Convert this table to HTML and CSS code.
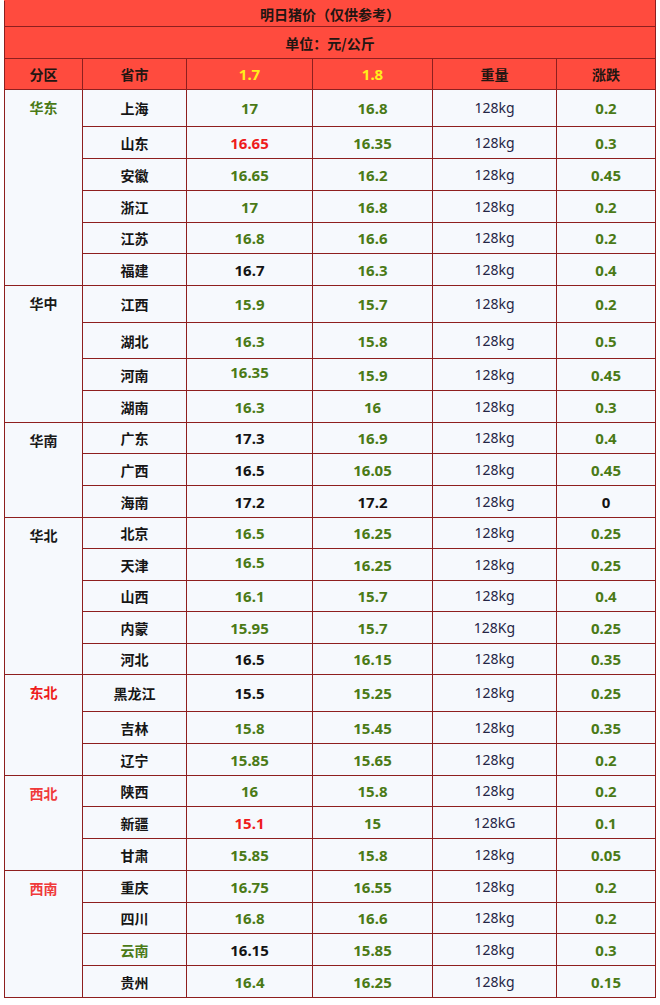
FILE: index.html
```html
<!DOCTYPE html>
<html lang="zh">
<head>
<meta charset="utf-8">
<title>明日猪价</title>
<link rel="stylesheet" href="styles.css">
</head>
<body>
<table class="price">
  <colgroup>
    <col class="c1"><col class="c2"><col class="c3"><col class="c4"><col class="c5"><col class="c6">
  </colgroup>
  <thead>
    <tr class="title"><th colspan="6">明日猪价（仅供参考）</th></tr>
    <tr class="unit"><th colspan="6">单位：元/公斤</th></tr>
    <tr class="head"><th>分区</th><th>省市</th><th class="yel">1.7</th><th class="yel">1.8</th><th>重量</th><th>涨跌</th></tr>
  </thead>
  <tbody>
    <tr class="t"><td class="reg g" rowspan="6">华东</td><td class="prov">上海</td><td class="n g">17</td><td class="n g">16.8</td><td class="w">128kg</td><td class="n g">0.2</td></tr>
    <tr><td class="prov">山东</td><td class="n r">16.65</td><td class="n g">16.35</td><td class="w">128kg</td><td class="n g">0.3</td></tr>
    <tr><td class="prov">安徽</td><td class="n g">16.65</td><td class="n g">16.2</td><td class="w">128kg</td><td class="n g">0.45</td></tr>
    <tr><td class="prov">浙江</td><td class="n g">17</td><td class="n g">16.8</td><td class="w">128kg</td><td class="n g">0.2</td></tr>
    <tr class="s"><td class="prov">江苏</td><td class="n g">16.8</td><td class="n g">16.6</td><td class="w">128kg</td><td class="n g">0.2</td></tr>
    <tr><td class="prov">福建</td><td class="n k">16.7</td><td class="n g">16.3</td><td class="w">128kg</td><td class="n g">0.4</td></tr>

    <tr class="t"><td class="reg" rowspan="4">华中</td><td class="prov">江西</td><td class="n g">15.9</td><td class="n g">15.7</td><td class="w">128kg</td><td class="n g">0.2</td></tr>
    <tr class="m"><td class="prov">湖北</td><td class="n g">16.3</td><td class="n g">15.8</td><td class="w">128kg</td><td class="n g">0.5</td></tr>
    <tr><td class="prov">河南</td><td class="n g up">16.35</td><td class="n g">15.9</td><td class="w">128kg</td><td class="n g">0.45</td></tr>
    <tr><td class="prov">湖南</td><td class="n g">16.3</td><td class="n g">16</td><td class="w">128kg</td><td class="n g">0.3</td></tr>

    <tr class="s"><td class="reg" rowspan="3">华南</td><td class="prov">广东</td><td class="n k">17.3</td><td class="n g">16.9</td><td class="w">128kg</td><td class="n g">0.4</td></tr>
    <tr><td class="prov">广西</td><td class="n k">16.5</td><td class="n g">16.05</td><td class="w">128kg</td><td class="n g">0.45</td></tr>
    <tr><td class="prov">海南</td><td class="n k">17.2</td><td class="n k">17.2</td><td class="w">128kg</td><td class="n k">0</td></tr>

    <tr class="s"><td class="reg" rowspan="5">华北</td><td class="prov">北京</td><td class="n g">16.5</td><td class="n g">16.25</td><td class="w">128kg</td><td class="n g">0.25</td></tr>
    <tr><td class="prov">天津</td><td class="n g up">16.5</td><td class="n g">16.25</td><td class="w">128kg</td><td class="n g">0.25</td></tr>
    <tr class="s"><td class="prov">山西</td><td class="n g">16.1</td><td class="n g">15.7</td><td class="w">128kg</td><td class="n g">0.4</td></tr>
    <tr><td class="prov">内蒙</td><td class="n g">15.95</td><td class="n g">15.7</td><td class="w">128Kg</td><td class="n g">0.25</td></tr>
    <tr class="s"><td class="prov">河北</td><td class="n k">16.5</td><td class="n g">16.15</td><td class="w">128kg</td><td class="n g">0.35</td></tr>

    <tr class="t"><td class="reg r" rowspan="3">东北</td><td class="prov">黑龙江</td><td class="n k">15.5</td><td class="n g">15.25</td><td class="w">128kg</td><td class="n g">0.25</td></tr>
    <tr><td class="prov">吉林</td><td class="n g">15.8</td><td class="n g">15.45</td><td class="w">128kg</td><td class="n g">0.35</td></tr>
    <tr><td class="prov">辽宁</td><td class="n g">15.85</td><td class="n g">15.65</td><td class="w">128kg</td><td class="n g">0.2</td></tr>

    <tr class="s"><td class="reg r light" rowspan="3">西北</td><td class="prov">陕西</td><td class="n g">16</td><td class="n g">15.8</td><td class="w">128kg</td><td class="n g">0.2</td></tr>
    <tr><td class="prov">新疆</td><td class="n r">15.1</td><td class="n g">15</td><td class="w">128kG</td><td class="n g">0.1</td></tr>
    <tr><td class="prov">甘肃</td><td class="n g">15.85</td><td class="n g">15.8</td><td class="w">128kg</td><td class="n g">0.05</td></tr>

    <tr><td class="reg r light" rowspan="4">西南</td><td class="prov">重庆</td><td class="n g">16.75</td><td class="n g">16.55</td><td class="w">128kg</td><td class="n g">0.2</td></tr>
    <tr class="s"><td class="prov">四川</td><td class="n g">16.8</td><td class="n g">16.6</td><td class="w">128kg</td><td class="n g">0.2</td></tr>
    <tr><td class="prov g">云南</td><td class="n k">16.15</td><td class="n g">15.85</td><td class="w">128kg</td><td class="n g">0.3</td></tr>
    <tr><td class="prov">贵州</td><td class="n g">16.4</td><td class="n g">16.25</td><td class="w">128kg</td><td class="n g">0.15</td></tr>
  </tbody>
</table>
</body>
</html>
```

FILE: styles.css
```css
html, body {
  margin: 0;
  padding: 0;
  background: #ffffff;
}

body {
  font-family: "Noto Sans", "Noto Sans CJK SC", sans-serif;
  color: #1a1a1a;
}

.price {
  margin-left: 4px;
  width: 651px;
  border-collapse: collapse;
  table-layout: fixed;
}

.c1 { width: 78px; }
.c2 { width: 104px; }
.c3 { width: 126px; }
.c4 { width: 120px; }
.c5 { width: 124px; }
.c6 { width: 99px; }

.price th,
.price td {
  border: 1px solid #8e1f1f;
  padding: 0;
  text-align: center;
  vertical-align: middle;
  line-height: 18px;
}

.price thead th {
  background: #ff4b3e;
  color: #221612;
  font-family: "Noto Sans CJK SC", "Noto Sans", sans-serif;
  font-weight: bold;
  font-size: 14px;
}

.price .title th {
  height: 25px;
  border-top-color: #ff4b3e;
}

.price .unit th {
  height: 31px;
}

.price .head th {
  height: 30px;
}

.price .head th.yel {
  color: #ffee1a;
  font-family: "Noto Sans", "Noto Sans CJK SC", sans-serif;
  font-size: 15px;
}

.price tbody td {
  background: #f6f9fd;
  height: 31px;
}

.price tbody tr.s td { height: 30px; }
.price tbody tr.t td { height: 36px; }
.price tbody tr.m td { height: 35px; }

.price td.reg {
  vertical-align: top;
  padding-top: 8px;
  font-family: "Noto Sans CJK SC", sans-serif;
  font-weight: bold;
  font-size: 14px;
  color: #1a1a1a;
}

.price td.prov {
  font-family: "Noto Sans CJK SC", sans-serif;
  font-weight: bold;
  font-size: 14px;
  color: #161616;
}

.price td.n {
  font-family: "Noto Sans", sans-serif;
  font-weight: bold;
  font-size: 15px;
}

.price tbody td.up {
  vertical-align: top;
  padding-top: 4px;
  height: 27px;
}

.price td.w {
  font-family: "Noto Sans", sans-serif;
  font-size: 14px;
  color: #252545;
}

.price td.g { color: #4a7a16; }
.price td.r { color: #ee1c1c; }
.price td.k { color: #141414; }
.price td.reg.light { color: #f03a3a; }
```
